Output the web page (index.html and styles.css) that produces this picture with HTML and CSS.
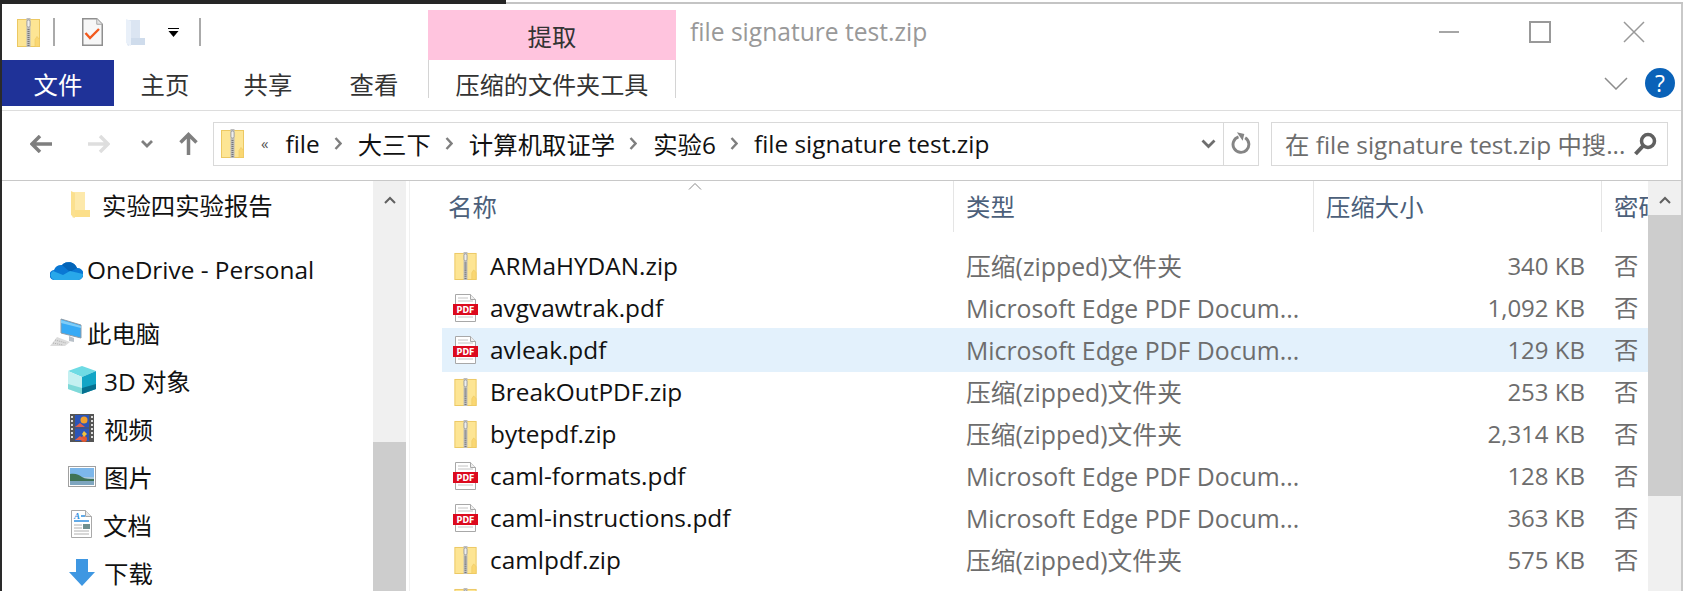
FILE: index.html
```html
<!DOCTYPE html>
<html lang="zh-CN">
<head>
    <meta charset="UTF-8">
    <title>file signature test.zip</title>
    <link rel="stylesheet" href="styles.css">
</head>
<body>

    <!-- Shared icons -->
    <svg class="defs" width="0" height="0">
        <symbol id="i-zip" viewBox="0 0 23 29">
            <rect x="0.500" y="1.500" width="22" height="27" fill="#fde594" stroke="#ecc862"/>
            <path d="M18 28.500v-7l2-3 2.500 3v7z" fill="#fad772" stroke="#ecc862" stroke-width="0.600"/>
            <rect x="9.500" y="0" width="4" height="29" fill="#bdbdbd"/>
            <rect x="10" y="2" width="3" height="7" rx="1.500" fill="#eee" stroke="#888" stroke-width="0.600"/>
            <path d="M11.500 11v17" stroke="#777" stroke-width="2" stroke-dasharray="1 1"/>
        </symbol>
        <symbol id="i-pdf" viewBox="0 0 25 28">
            <path d="M2.500 0.500h15l5 5v22h-20z" fill="#fff" stroke="#a8a8a8"/>
            <path d="M17.500 0.500v5h5" fill="#eee" stroke="#a8a8a8"/>
            <path d="M5 4h10M5 7h15M5 23h15" stroke="#c4c4c4"/>
            <rect x="0" y="10" width="25" height="11" fill="#dc0a1e"/>
            <text class="pdf-label" x="12.500" y="18.500" text-anchor="middle">PDF</text>
        </symbol>
        <symbol id="i-folder" viewBox="0 0 19 27">
            <path d="M1 1h13v18h5v7H4l-2 1-1-2z" fill="#fde9ab"/>
            <path d="M0 0l4 2v25l-4-3z" fill="#fbe08f"/>
            <path d="M4 19h15v7H4z" fill="#fcdf8a"/>
        </symbol>
        <symbol id="i-folder-pale" viewBox="0 0 19 27">
            <path d="M1 1h13v18h5v7H4l-2 1-1-2z" fill="#dbe5f2"/>
            <path d="M0 0l5 2v25l-5-3z" fill="#e9f0f9"/>
            <path d="M5 19h14v7H5z" fill="#cfdcec"/>
        </symbol>
        <symbol id="i-cloud" viewBox="0 0 33 21">
            <path d="M5 21a5 5 0 0 1-1-10 8 8 0 0 1 8-5 9 9 0 0 1 15 3 6 6 0 0 1 1 12z" fill="#0a78d4"/>
            <path d="M12 6a9 9 0 0 1 15 3l-7 4z" fill="#0364b8"/>
            <path d="M4 21a5 5 0 0 1-1-9l10 4 7-4 13 3a6 6 0 0 1-5 6z" fill="#28a8ea"/>
        </symbol>
        <symbol id="i-pc" viewBox="0 0 32 28">
            <path d="M11 1l20 6v13L11 15z" fill="#37aaf5" stroke="#8f9ba6"/>
            <path d="M11 2l20 6v2L11 5z" fill="#7fcdf8"/>
            <path d="M19 18l5 2v4l-5-1z" fill="#b8c0c8"/>
            <path d="M7 19l13 5-5 4H0z" fill="#dcdcdc"/>
            <path d="M5 22l11 3M3 25l10 2" stroke="#b0b0b0" stroke-dasharray="1 1"/>
        </symbol>
        <symbol id="i-cube" viewBox="0 0 28 28">
            <path d="M14 0l14 5-14 6L0 5z" fill="#6edbe4"/>
            <path d="M0 5l14 6v17L0 23z" fill="#c4f0f1"/>
            <path d="M28 5v18l-14 5V11z" fill="#12a5c6"/>
            <path d="M0 18l14 4v6L0 23z" fill="#7fd9d9"/>
            <path d="M28 18v5l-14 5v-6z" fill="#06708f"/>
        </symbol>
        <symbol id="i-video" viewBox="0 0 24 28">
            <rect width="24" height="28" fill="#555"/>
            <rect x="5" y="1" width="14" height="12.500" fill="#2c55b8"/>
            <rect x="5" y="14.500" width="14" height="12.500" fill="#2c55b8"/>
            <circle cx="14" cy="6" r="3.500" fill="#f2a02c"/>
            <circle cx="14" cy="25" r="3" fill="#e4572e"/>
            <path d="M5 13l5-4 5 4zM5 26l5-4 5 4z" fill="#e0604a"/>
            <path d="M14 17l3 3-3 3-2-3z" fill="#f2c23c"/>
            <path d="M2 2v24M22 2v24" stroke="#ddd" stroke-width="2" stroke-dasharray="2 2"/>
        </symbol>
        <symbol id="i-picture" viewBox="0 0 28 21">
            <rect x="0.500" y="0.500" width="27" height="20" fill="#fff" stroke="#a0a0a0"/>
            <rect x="2" y="2" width="24" height="9" fill="#7db7ea"/>
            <rect x="2" y="11" width="24" height="8" fill="#a9c7dc"/>
            <path d="M2 8c6-1 9 1 12 3s8 2 12 2v2H2z" fill="#3f7355"/>
            <path d="M2 15h24v4H2z" fill="#7fa6c0"/>
        </symbol>
        <symbol id="i-doc" viewBox="0 0 21 28">
            <path d="M0.500 0.500h14l6 6v21H0.500z" fill="#fff" stroke="#a9a9a9"/>
            <path d="M14.500 0.500v6h6" fill="#e8e8e8" stroke="#a9a9a9"/>
            <text class="doc-label" x="3" y="9">A</text>
            <path d="M10 6h4M3 11h15" stroke="#2f8fe0" stroke-width="1.400"/>
            <path d="M3 15h8M3 18h8M3 21h15M3 24h15" stroke="#b0b0b0"/>
            <rect x="12" y="14" width="7" height="5" fill="#6f8f8f"/>
        </symbol>
        <symbol id="i-download" viewBox="0 0 26 27">
            <path d="M7 0h12v13h7L13 27 0 13h7z" fill="#3e97e2"/>
        </symbol>
    </svg>

    <div class="top-edge">
        <div class="top-edge-dark"></div>
        <div class="top-edge-light"></div>
    </div>

    <div class="window">

        <!-- Title bar -->
        <div class="titlebar">
            <div class="qat">
                <svg class="qat-zip"><use href="#i-zip"/></svg>
                <span class="qat-sep"></span>
                <svg class="qat-check" viewBox="0 0 21 28">
                    <path d="M0.750 0.750h14l5.500 5.500v21h-19.500z" fill="#f7f7f7" stroke="#8f8f8f" stroke-width="1.500"/>
                    <path d="M14.750 0.750v5.500h5.500" fill="#e4e4e4" stroke="#a8a8a8"/>
                    <path d="M3.500 15l4.500 5 9-9" fill="none" stroke="#f2591d" stroke-width="2.400"/>
                </svg>
                <svg class="qat-folder"><use href="#i-folder-pale"/></svg>
                <svg class="qat-more" viewBox="0 0 11 9">
                    <path d="M0 0.500h11" stroke="#000"/>
                    <path d="M0.500 3h10L5.500 9z" fill="#000"/>
                </svg>
                <span class="qat-sep qat-sep-last"></span>
            </div>
            <div class="context-title">提取</div>
            <div class="window-title">file signature test.zip</div>
            <div class="window-buttons">
                <svg class="win-btn win-min" viewBox="0 0 22 22"><path d="M0 11h20" stroke="#a6a6a6" stroke-width="2"/></svg>
                <svg class="win-btn" viewBox="0 0 22 22"><rect x="1" y="1" width="20" height="20" fill="none" stroke="#999" stroke-width="2"/></svg>
                <svg class="win-btn" viewBox="0 0 22 22"><path d="M1 1l20 20M21 1L1 21" stroke="#999" stroke-width="1.500"/></svg>
            </div>
        </div>

        <!-- Ribbon tabs -->
        <div class="ribbon">
            <div class="tab tab-file">文件</div>
            <div class="tab tab-home">主页</div>
            <div class="tab tab-share">共享</div>
            <div class="tab tab-view">查看</div>
            <div class="tab tab-context">压缩的文件夹工具</div>
            <div class="ribbon-right">
                <svg class="ribbon-chevron" viewBox="0 0 24 13"><path d="M1 1l11 11L23 1" fill="none" stroke="#8c8c8c" stroke-width="1.500"/></svg>
                <div class="help">?</div>
            </div>
        </div>

        <!-- Address row -->
        <div class="address-row">
            <div class="nav-buttons">
                <svg class="nav-back" viewBox="0 0 22 18"><path d="M22 9H3M10 1L2 9l8 8" fill="none" stroke="#7f7f7f" stroke-width="3.500"/></svg>
                <svg class="nav-forward" viewBox="0 0 22 18"><path d="M0 9h19M12 1l8 8-8 8" fill="none" stroke="#dedede" stroke-width="3.500"/></svg>
                <svg class="nav-recent" viewBox="0 0 12 8"><path d="M1 1l5 5 5-5" fill="none" stroke="#7f7f7f" stroke-width="2.800"/></svg>
                <svg class="nav-up" viewBox="0 0 19 23"><path d="M9.500 23V3M1.500 10.500l8-8 8 8" fill="none" stroke="#7f7f7f" stroke-width="3.500"/></svg>
            </div>
            <div class="address">
                <svg class="address-zip"><use href="#i-zip"/></svg>
                <span class="more">«</span>
                <span class="crumb crumb-first">file</span>
                <svg class="crumb-sep" viewBox="0 0 8 13"><path d="M1.500 1l5 5.500-5 5.500" fill="none" stroke="#7f7f7f" stroke-width="2.400"/></svg>
                <span class="crumb">大三下</span>
                <svg class="crumb-sep" viewBox="0 0 8 13"><path d="M1.500 1l5 5.500-5 5.500" fill="none" stroke="#7f7f7f" stroke-width="2.400"/></svg>
                <span class="crumb">计算机取证学</span>
                <svg class="crumb-sep" viewBox="0 0 8 13"><path d="M1.500 1l5 5.500-5 5.500" fill="none" stroke="#7f7f7f" stroke-width="2.400"/></svg>
                <span class="crumb">实验6</span>
                <svg class="crumb-sep" viewBox="0 0 8 13"><path d="M1.500 1l5 5.500-5 5.500" fill="none" stroke="#7f7f7f" stroke-width="2.400"/></svg>
                <span class="crumb">file signature test.zip</span>
                <svg class="address-drop" viewBox="0 0 15 10"><path d="M1.500 1.500l6 6 6-6" fill="none" stroke="#6e6e6e" stroke-width="2.800"/></svg>
                <div class="refresh">
                    <svg viewBox="0 0 24 28"><path d="M9 5.500a9.500 9.500 0 1 0 8 1" fill="none" stroke="#858585" stroke-width="3.500"/><path d="M7 0l9 2-2 8z" fill="#858585"/></svg>
                </div>
            </div>
            <div class="search">
                <span class="search-text">在 file signature test.zip 中搜...</span>
                <svg class="search-icon" viewBox="0 0 24 24"><circle cx="15" cy="9" r="6.500" fill="none" stroke="#606060" stroke-width="3.500"/><path d="M10 14l-7.500 8" stroke="#606060" stroke-width="4"/></svg>
            </div>
        </div>

        <div class="content">

            <!-- Navigation pane -->
            <div class="sidebar">
                <div class="tree">
                    <div class="tree-item level-1"><svg class="tree-icon icon-folder"><use href="#i-folder"/></svg>实验四实验报告</div>
                    <div class="tree-item level-0 group-onedrive"><svg class="tree-icon icon-cloud"><use href="#i-cloud"/></svg>OneDrive - Personal</div>
                    <div class="tree-item level-0 group-pc"><svg class="tree-icon icon-pc"><use href="#i-pc"/></svg>此电脑</div>
                    <div class="tree-item level-1"><svg class="tree-icon icon-cube"><use href="#i-cube"/></svg>3D 对象</div>
                    <div class="tree-item level-1"><svg class="tree-icon icon-video"><use href="#i-video"/></svg>视频</div>
                    <div class="tree-item level-1"><svg class="tree-icon icon-picture"><use href="#i-picture"/></svg>图片</div>
                    <div class="tree-item level-1"><svg class="tree-icon icon-doc"><use href="#i-doc"/></svg>文档</div>
                    <div class="tree-item level-1"><svg class="tree-icon icon-download"><use href="#i-download"/></svg>下载</div>
                </div>
                <div class="scrollbar scrollbar-nav">
                    <div class="scroll-up"><svg viewBox="0 0 12 8"><path d="M1 7l5-5 5 5" fill="none" stroke="#606060" stroke-width="2"/></svg></div>
                    <div class="scroll-gap"></div>
                    <div class="scroll-thumb"></div>
                </div>
            </div>

            <!-- File list -->
            <div class="files">
                <div class="columns">
                    <div class="col col-name">名称<svg class="sort-arrow" viewBox="0 0 14 7"><path d="M1 6.500l6-6 6 6" fill="none" stroke="#888"/></svg></div>
                    <div class="col">类型</div>
                    <div class="col">压缩大小</div>
                    <div class="col col-last">密码</div>
                </div>
                <div class="rows">
                    <div class="row"><div class="name"><svg class="file-icon"><use href="#i-zip"/></svg>ARMaHYDAN.zip</div><div class="type">压缩(zipped)文件夹</div><div class="size">340 KB</div><div class="pwd">否</div></div>
                    <div class="row"><div class="name"><svg class="file-icon"><use href="#i-pdf"/></svg>avgvawtrak.pdf</div><div class="type">Microsoft Edge PDF Docum...</div><div class="size">1,092 KB</div><div class="pwd">否</div></div>
                    <div class="row row-hover"><div class="name"><svg class="file-icon"><use href="#i-pdf"/></svg>avleak.pdf</div><div class="type">Microsoft Edge PDF Docum...</div><div class="size">129 KB</div><div class="pwd">否</div></div>
                    <div class="row"><div class="name"><svg class="file-icon"><use href="#i-zip"/></svg>BreakOutPDF.zip</div><div class="type">压缩(zipped)文件夹</div><div class="size">253 KB</div><div class="pwd">否</div></div>
                    <div class="row"><div class="name"><svg class="file-icon"><use href="#i-zip"/></svg>bytepdf.zip</div><div class="type">压缩(zipped)文件夹</div><div class="size">2,314 KB</div><div class="pwd">否</div></div>
                    <div class="row"><div class="name"><svg class="file-icon"><use href="#i-pdf"/></svg>caml-formats.pdf</div><div class="type">Microsoft Edge PDF Docum...</div><div class="size">128 KB</div><div class="pwd">否</div></div>
                    <div class="row"><div class="name"><svg class="file-icon"><use href="#i-pdf"/></svg>caml-instructions.pdf</div><div class="type">Microsoft Edge PDF Docum...</div><div class="size">363 KB</div><div class="pwd">否</div></div>
                    <div class="row"><div class="name"><svg class="file-icon"><use href="#i-zip"/></svg>camlpdf.zip</div><div class="type">压缩(zipped)文件夹</div><div class="size">575 KB</div><div class="pwd">否</div></div>
                    <div class="row"><div class="name"><svg class="file-icon"><use href="#i-zip"/></svg></div></div>
                </div>
            </div>

            <div class="scrollbar scrollbar-files">
                <div class="scroll-up"><svg viewBox="0 0 12 8"><path d="M1 7l5-5 5 5" fill="none" stroke="#606060" stroke-width="2"/></svg></div>
                <div class="scroll-thumb"></div>
                <div class="scroll-gap"></div>
            </div>
        </div>
    </div>

</body>
</html>
```

FILE: styles.css
```css
html, body {
    margin: 0;
    padding: 0;
    height: 591px;
    overflow: hidden;
}
body {
    background-color: #2a2a2a;
    font-family: "Open Sans", "Noto Sans CJK SC", sans-serif;
    font-size: 24.4px;
    color: #111;
}
svg {
    display: block;
    flex-shrink: 0;
}
.defs {
    display: none;
}
.pdf-label {
    font-family: "DejaVu Sans", sans-serif;
    font-size: 8px;
    font-weight: bold;
    fill: #fff;
}
.doc-label {
    font-family: "Liberation Serif", serif;
    font-size: 9px;
    font-weight: bold;
    font-style: italic;
    fill: #2f8fe0;
}

/* Top edge of the window behind */
.top-edge {
    display: flex;
    height: 4px;
}
.top-edge-dark {
    width: 506px;
    background-color: #262626;
}
.top-edge-light {
    flex: 1;
    background-color: #fff;
    border-bottom: 2px solid #c4c4c4;
    box-sizing: border-box;
}

.window {
    margin-left: 2px;
    width: 1679px;
    height: 587px;
    background-color: white;
    border-right: 2px solid #c9c9c9;
    overflow: hidden;
}

/* Title bar */
.titlebar {
    display: flex;
    height: 56px;
}
.qat {
    display: flex;
    align-items: center;
    width: 426px;
    height: 56px;
}
.qat-zip {
    width: 23px;
    height: 29px;
    margin-left: 15px;
}
.qat-sep {
    width: 2px;
    height: 28px;
    margin-left: 13px;
    background-color: #aaa;
}
.qat-check {
    width: 21px;
    height: 28px;
    margin-left: 27px;
}
.qat-folder {
    width: 19px;
    height: 27px;
    margin-left: 23px;
}
.qat-more {
    width: 11px;
    height: 9px;
    margin-left: 23px;
}
.qat-sep-last {
    margin-left: 20px;
}
.context-title {
    width: 248px;
    height: 50px;
    margin-top: 6px;
    background-color: #ffc4de;
    text-align: center;
    line-height: 54px;
    color: #333;
}
.window-title {
    margin-left: 14px;
    font-size: 24.6px;
    line-height: 56px;
    color: #999;
}
.window-buttons {
    display: flex;
    align-items: center;
    margin-left: auto;
    height: 56px;
    gap: 72px;
    padding-right: 36px;
}
.win-btn {
    width: 22px;
    height: 22px;
}
.win-min {
    margin-right: -4px;
}

/* Ribbon */
.ribbon {
    display: flex;
    height: 50px;
    border-bottom: 1px solid #ddd;
}
.tab {
    height: 46px;
    line-height: 50px;
    text-align: center;
    color: #333;
}
.tab-file {
    width: 112px;
    background-color: #1f3298;
    color: white;
}
.tab-home {
    width: 102px;
}
.tab-share {
    width: 104px;
}
.tab-view {
    width: 108px;
}
.tab-context {
    width: 246px;
    height: 38px;
    font-size: 24.1px;
    border: 1px solid #d4d4d4;
    border-width: 0 1px;
}
.ribbon-right {
    display: flex;
    align-items: center;
    height: 46px;
    margin-left: auto;
    padding-right: 6px;
}
.ribbon-chevron {
    width: 24px;
    height: 13px;
}
.help {
    width: 30px;
    height: 30px;
    margin-left: 17px;
    border-radius: 50%;
    background-color: #0a62b8;
    color: white;
    font-size: 23px;
    line-height: 30px;
    text-align: center;
}

/* Address row */
.address-row {
    display: flex;
    align-items: center;
    height: 70px;
    padding-bottom: 4px;
    box-sizing: border-box;
    border-bottom: 1px solid #c8c8c8;
}
.nav-buttons {
    display: flex;
    align-items: center;
    width: 211px;
}
.nav-back {
    width: 22px;
    height: 18px;
    margin-left: 28px;
}
.nav-forward {
    width: 22px;
    height: 18px;
    margin-left: 36px;
}
.nav-recent {
    width: 12px;
    height: 8px;
    margin-left: 31px;
}
.nav-up {
    width: 19px;
    height: 23px;
    margin-left: 26px;
}
.address {
    display: flex;
    align-items: center;
    width: 1044px;
    height: 42px;
    border: 1px solid #d9d9d9;
}
.address-zip {
    width: 23px;
    height: 29px;
    margin-left: 7px;
}
.more {
    margin-left: 17px;
    font-size: 15px;
    color: #555;
    line-height: 15px;
}
.crumb {
    color: #111;
    white-space: nowrap;
}
.crumb-first {
    margin-left: 17px;
}
.crumb-sep {
    width: 8px;
    height: 13px;
    margin: 0 16px 0 14px;
}
.address-drop {
    width: 15px;
    height: 10px;
    margin-left: auto;
    margin-right: 7px;
}
.refresh {
    display: flex;
    align-items: center;
    justify-content: center;
    width: 34px;
    height: 42px;
    border-left: 1px solid #d9d9d9;
}
.refresh svg {
    width: 20px;
    height: 24px;
}
.search {
    display: flex;
    align-items: center;
    width: 395px;
    height: 42px;
    margin-left: 12px;
    border: 1px solid #d9d9d9;
}
.search-text {
    margin-left: 13px;
    color: #6d6d6d;
    white-space: nowrap;
}
.search-icon {
    width: 24px;
    height: 24px;
    margin-left: auto;
    margin-right: 10px;
}

/* Main area */
.content {
    display: flex;
    height: 410px;
}

/* Navigation pane */
.sidebar {
    display: flex;
    width: 404px;
    flex-shrink: 0;
}
.tree {
    width: 371px;
    margin-top: -1px;
}
.tree-item {
    display: flex;
    align-items: center;
    height: 48px;
    white-space: nowrap;
}
.level-0 {
    padding-left: 48px;
}
.level-1 {
    padding-left: 66px;
}
.group-onedrive {
    margin-top: 17px;
}
.group-pc {
    margin-top: 15px;
}
.icon-folder { width: 19px; height: 27px; margin: 0 12px 0 3px; }
.icon-cloud { width: 33px; height: 21px; margin-right: 4px; }
.icon-pc { width: 32px; height: 28px; margin-right: 5px; }
.icon-cube { width: 28px; height: 28px; margin-right: 8px; }
.icon-video { width: 24px; height: 28px; margin: 0 10px 0 2px; }
.icon-picture { width: 28px; height: 21px; margin-right: 8px; }
.icon-doc { width: 21px; height: 28px; margin: 0 11px 0 3px; }
.icon-download { width: 26px; height: 27px; margin: 0 9px 0 1px; }

/* Scrollbars */
.scrollbar {
    display: flex;
    flex-direction: column;
    background-color: #f0f0f0;
}
.scrollbar-nav {
    width: 33px;
}
.scrollbar-files {
    width: 33px;
    flex-shrink: 0;
}
.scroll-up {
    display: flex;
    align-items: center;
    justify-content: center;
    height: 38px;
    flex-shrink: 0;
}
.scrollbar-files .scroll-up {
    height: 34px;
    padding-top: 4px;
    box-sizing: border-box;
}
.scroll-up svg {
    width: 12px;
    height: 8px;
}
.scroll-gap {
    flex: 1;
}
.scrollbar-nav .scroll-gap {
    flex: none;
    height: 223px;
}
.scroll-thumb {
    height: 281px;
    background-color: #cdcdcd;
    flex-shrink: 0;
}
.scrollbar-nav .scroll-thumb {
    flex: 1;
}

/* File list */
.files {
    flex: 1;
    min-width: 0;
    margin-left: 3px;
    border-left: 1px solid #f0f0f0;
    overflow: hidden;
}
.columns {
    display: grid;
    grid-template-columns: 544px 360px 288px 47px;
    height: 51px;
    margin-bottom: 13px;
    color: #4c607a;
}
.col {
    padding-left: 12px;
    line-height: 52px;
    border-right: 1px solid #e5e5e5;
    white-space: nowrap;
    overflow: hidden;
}
.col-name {
    position: relative;
    padding-left: 38px;
}
.col-last {
    border-right: none;
}
.sort-arrow {
    position: absolute;
    top: 2px;
    left: 278px;
    width: 14px;
    height: 7px;
}
.row {
    display: grid;
    grid-template-columns: 511px 360px 288px 47px;
    height: 42px;
    margin-left: 32px;
    line-height: 42px;
    color: #6d6d6d;
    white-space: nowrap;
}
.row-hover {
    background-color: #e3f1fc;
    box-shadow: 0 -1px 0 #e3f1fc, 0 1px 0 #e3f1fc;
}
.name {
    display: flex;
    align-items: center;
    padding-left: 11px;
    color: #111;
}
.file-icon {
    width: 25px;
    height: 28px;
    margin-right: 12px;
}
.type {
    padding-left: 13px;
    font-size: 24.8px;
}
.size {
    padding-right: 16px;
    font-size: 24px;
    text-align: right;
}
.pwd {
    padding-left: 13px;
}
```
